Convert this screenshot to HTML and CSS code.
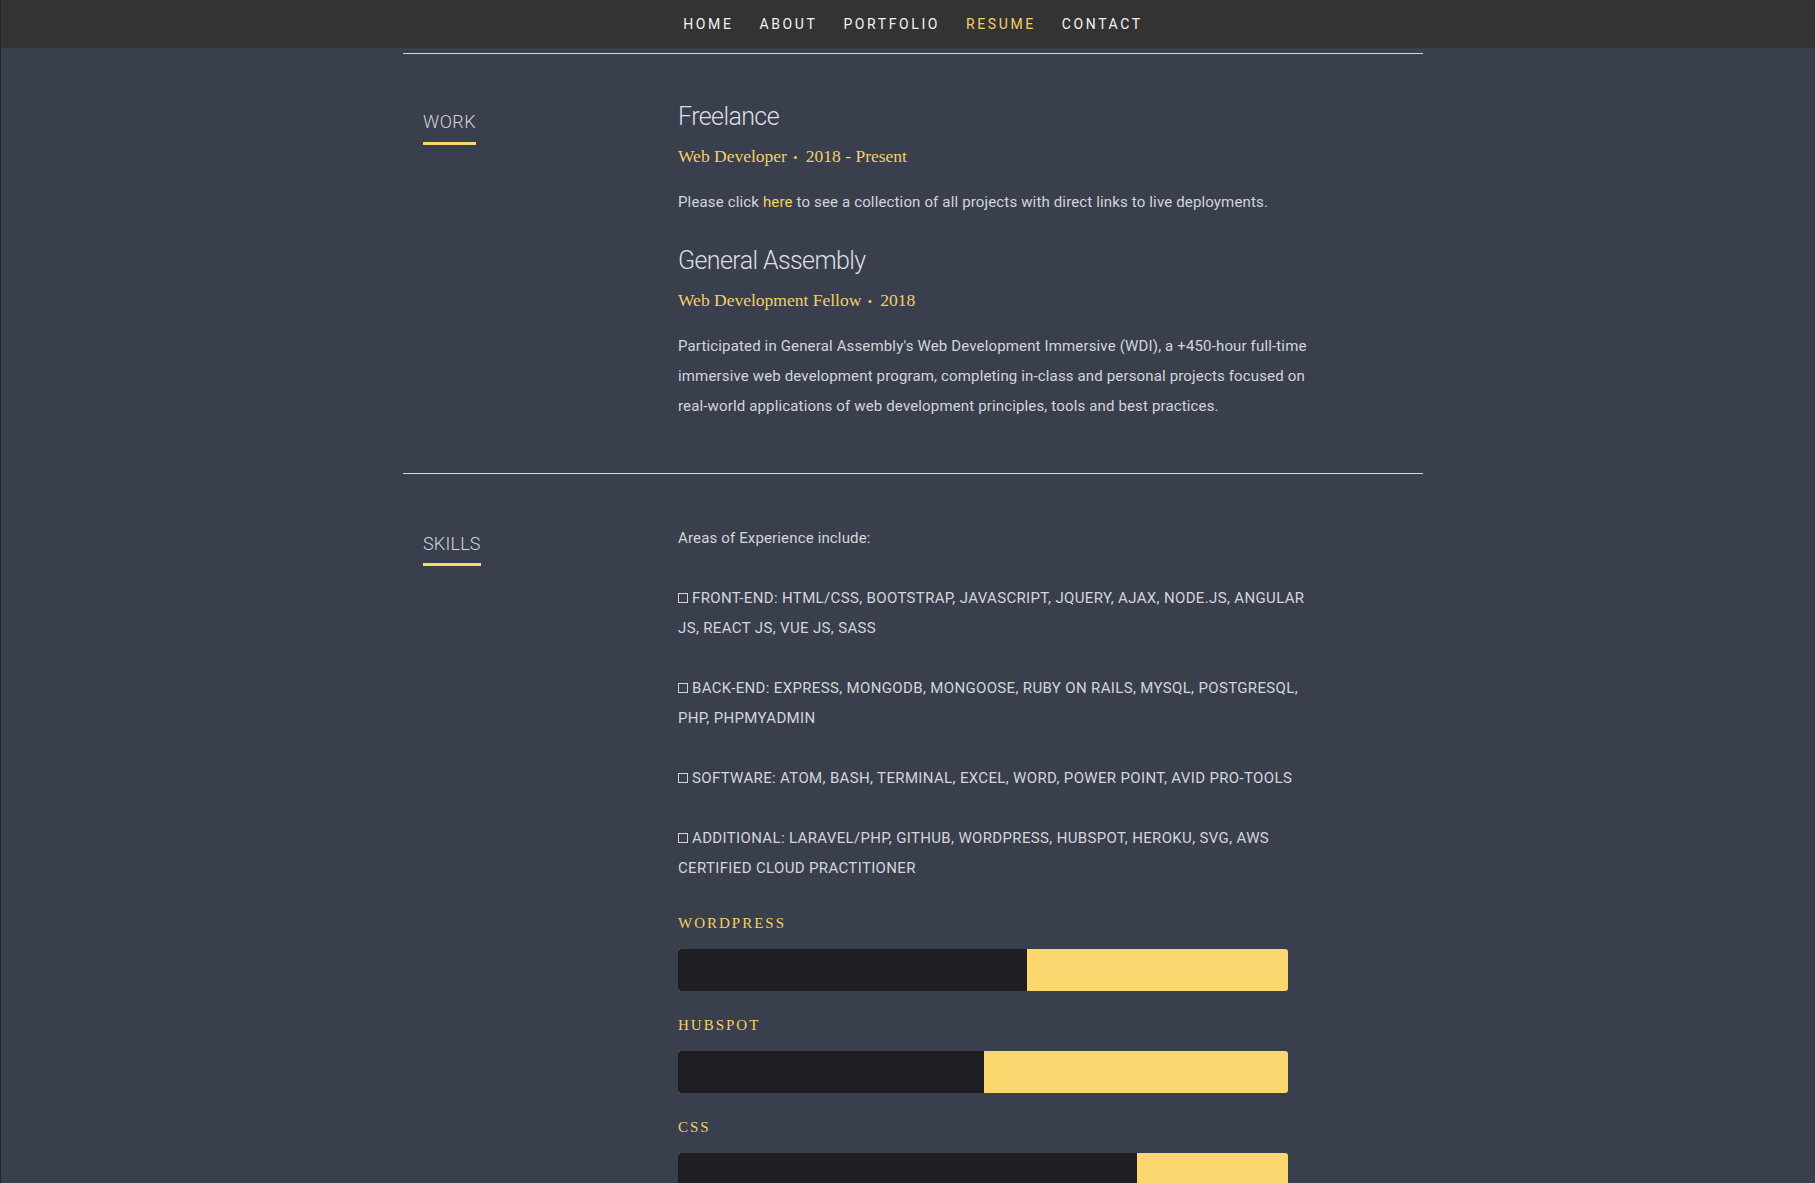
FILE: index.html
```html
<!DOCTYPE html>
<html lang="en">
<head>
<meta charset="utf-8">
<title>Resume</title>
<link rel="stylesheet" href="styles.css">
</head>
<body>
<nav class="topnav">
  <ul class="nav-list">
    <li><a href="#">Home</a></li>
    <li><a href="#">About</a></li>
    <li><a href="#">Portfolio</a></li>
    <li><a href="#" class="current">Resume</a></li>
    <li><a href="#">Contact</a></li>
  </ul>
</nav>
<main class="page">
  <div class="container">
    <section class="row work">
      <div class="label-col">
        <h2 class="section-title">Work</h2>
      </div>
      <div class="content-col">
        <div class="entry">
          <h3 class="entry-title">Freelance</h3>
          <p class="entry-info">Web Developer <span class="bullet">&bull;</span> <em class="date">2018 - Present</em></p>
          <p class="text">Please click <a href="#" class="link">here</a> to see a collection of all projects with direct links to live deployments.</p>
        </div>
        <div class="entry">
          <h3 class="entry-title">General Assembly</h3>
          <p class="entry-info">Web Development Fellow <span class="bullet">&bull;</span> <em class="date">2018</em></p>
          <p class="text">Participated in General Assembly's Web Development Immersive (WDI), a +450-hour full-time immersive web development program, completing in-class and personal projects focused on real-world applications of web development principles, tools and best practices.</p>
        </div>
      </div>
    </section>
    <section class="row skills">
      <div class="label-col">
        <h2 class="section-title">Skills</h2>
      </div>
      <div class="content-col">
        <p class="text skill-p">Areas of Experience include:</p>
        <p class="text skill-p caps"><span class="box"></span>FRONT-END: HTML/CSS, BOOTSTRAP, JAVASCRIPT, JQUERY, AJAX, NODE.JS, ANGULAR JS, REACT JS, VUE JS, SASS</p>
        <p class="text skill-p caps"><span class="box"></span>BACK-END: EXPRESS, MONGODB, MONGOOSE, RUBY ON RAILS, MYSQL, POSTGRESQL, PHP, PHPMYADMIN</p>
        <p class="text skill-p caps"><span class="box"></span>SOFTWARE: ATOM, BASH, TERMINAL, EXCEL, WORD, POWER POINT, AVID PRO-TOOLS</p>
        <p class="text skill-p caps"><span class="box"></span>ADDITIONAL: LARAVEL/PHP, GITHUB, WORDPRESS, HUBSPOT, HEROKU, SVG, AWS CERTIFIED CLOUD PRACTITIONER</p>
        <ul class="bars">
          <li class="bar-item">
            <em class="bar-label">WordPress</em>
            <div class="bar"><span class="bar-fill" style="width:57.2%"></span></div>
          </li>
          <li class="bar-item">
            <em class="bar-label">Hubspot</em>
            <div class="bar"><span class="bar-fill" style="width:50.1%"></span></div>
          </li>
          <li class="bar-item">
            <em class="bar-label">CSS</em>
            <div class="bar"><span class="bar-fill" style="width:75.2%"></span></div>
          </li>
        </ul>
      </div>
    </section>
  </div>
</main>
</body>
</html>
```
FILE: styles.css
```css
html, body {
  margin: 0;
  padding: 0;
}
body {
  background: #3a3f4d;
  font-family: Roboto, "Liberation Sans", sans-serif;
  color: #d3d5db;
  border-left: 1px solid #23262d;
  min-height: 1183px;
}
.topnav {
  background: #333333;
  height: 48px;
}
.nav-list {
  list-style: none;
  margin: 0;
  padding: 0 0 0 10px;
  display: flex;
  justify-content: center;
  gap: 26px;
  height: 48px;
  align-items: center;
}
.nav-list a {
  color: #f2f2f2;
  text-decoration: none;
  text-transform: uppercase;
  font-family: Roboto, sans-serif;
  font-size: 14px;
  letter-spacing: 2.6px;
  line-height: 20px;
  display: block;
  padding-bottom: 1px;
}
.nav-list a.current {
  color: #f6cf62;
}
.page {
  padding-left: 10px;
  padding-top: 5px;
}
.container {
  width: 1020px;
  margin: 0 auto;
}
.row {
  display: flex;
  border-top: 1px solid #d5d8de;
}
.work {
  padding: 48px 0 52px;
}
.skills {
  padding: 49px 0 0;
}
.label-col {
  width: 255px;
  padding-left: 20px;
  box-sizing: border-box;
  flex: none;
}
.content-col {
  width: 660px;
  padding-left: 20px;
  box-sizing: border-box;
}
.section-title {
  display: inline-block;
  margin: 0;
  font-size: 18px;
  font-weight: 300;
  letter-spacing: 0.5px;
  text-transform: uppercase;
  color: #d3d5dc;
  line-height: 24px;
  padding-bottom: 8px;
  border-bottom: 3px solid #fbd770;
}
.work .section-title {
  margin-top: 8px;
}
.skills .section-title {
  margin-top: 9px;
  padding-bottom: 7px;
  letter-spacing: 0.2px;
}
.entry-title {
  margin: 0;
  font-size: 25px;
  font-weight: 300;
  color: #dcdee3;
  line-height: 30px;
  letter-spacing: -0.6px;
}
.entry-info {
  margin: 12px 0 0;
  font-family: "Liberation Serif", serif;
  font-size: 17.5px;
  line-height: 24px;
  color: #f6cf62;
}
.bullet {
  margin: 0 4px 0 2px;
  font-size: 12px;
}
.date {
  font-style: normal;
}
.text {
  margin: 0;
  font-size: 15px;
  line-height: 30px;
  letter-spacing: 0.15px;
  color: #d3d5db;
}
.entry-info + .text {
  margin-top: 17px;
}
.entry + .entry {
  margin-top: 29px;
}
.link {
  color: #f6cf62;
  text-decoration: none;
}
.skill-p {
  margin-bottom: 30px;
  width: 640px;
}
.skill-p.caps {
  letter-spacing: 0.35px;
  width: 630px;
}
.box {
  display: inline-block;
  width: 8px;
  height: 8px;
  border: 1px solid #d3d5db;
  margin-right: 4px;
  vertical-align: 0;
}
.bars {
  list-style: none;
  margin: 0;
  padding: 0;
}
.bar-label {
  display: block;
  font-style: normal;
  font-family: "Liberation Serif", serif;
  text-transform: uppercase;
  font-size: 15px;
  letter-spacing: 2px;
  line-height: 20px;
  color: #f6cf62;
  margin-bottom: 16px;
}
.bar {
  width: 610px;
  height: 42px;
  background: #fbd770;
  border-radius: 3px;
  overflow: hidden;
  margin-bottom: 24px;
}
.bar-fill {
  display: block;
  height: 100%;
  background: #1e1f23;
}
```
